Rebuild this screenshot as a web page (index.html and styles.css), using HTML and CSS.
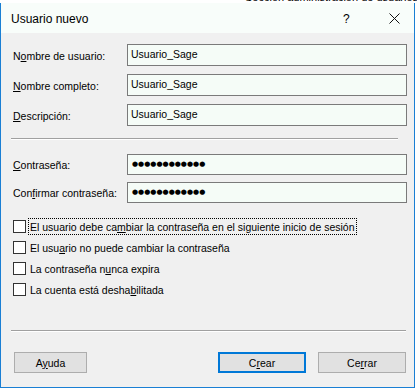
FILE: index.html
```html
<!DOCTYPE html>
<html lang="es">
<head>
<meta charset="utf-8">
<title>Usuario nuevo</title>
<link rel="stylesheet" href="styles.css">
</head>
<body>
<div class="behind"><span>Sección administración de usuarios LDAP</span></div>
<div class="window">
  <div class="titlebar">
    <span class="title">Usuario nuevo</span>
    <span class="help">?</span>
    <span class="close"><svg width="11" height="11" viewBox="0 0 11 11"><path d="M0.5 0.5 L10.5 10.5 M10.5 0.5 L0.5 10.5" stroke="#111" stroke-width="1" fill="none"/></svg></span>
  </div>
  <div class="content">
    <div class="group g1">
      <div class="row"><span class="label">N<u>o</u>mbre de usuario:</span><div class="field tall">Usuario_Sage</div></div>
      <div class="row"><span class="label"><u>N</u>ombre completo:</span><div class="field tall">Usuario_Sage</div></div>
      <div class="row"><span class="label"><u>D</u>escripción:</span><div class="field tall">Usuario_Sage</div></div>
    </div>
    <div class="sep sep1"></div>
    <div class="group g2">
      <div class="row"><span class="label"><u>C</u>ontraseña:</span><div class="field short"><span class="dots">●●●●●●●●●●●●</span></div></div>
      <div class="row"><span class="label">Con<u>f</u>irmar contraseña:</span><div class="field short"><span class="dots">●●●●●●●●●●●●</span></div></div>
    </div>
    <div class="checks">
      <div class="check"><span class="box"></span><span class="ctext focus">El usuario debe ca<u>m</u>biar la contraseña en el siguiente inicio de sesión</span></div>
      <div class="check"><span class="box"></span><span class="ctext">El usu<u>a</u>rio no puede cambiar la contraseña</span></div>
      <div class="check"><span class="box"></span><span class="ctext">La contraseña n<u>u</u>nca expira</span></div>
      <div class="check"><span class="box"></span><span class="ctext">La cuenta está desha<u>b</u>ilitada</span></div>
    </div>
    <div class="sep sep2"></div>
    <div class="buttons">
      <button class="btn help-btn">A<u>y</u>uda</button>
      <button class="btn wide default">C<u>r</u>ear</button>
      <button class="btn wide">Ce<u>r</u>rar</button>
    </div>
  </div>
</div>
</body>
</html>
```
FILE: styles.css
```css
html, body {
  margin: 0;
  padding: 0;
  background: #ffffff;
}
body {
  width: 417px;
  height: 388px;
  overflow: hidden;
  font-family: "Liberation Sans", Arial, sans-serif;
  font-size: 10.5px;
  color: #000;
}
.behind {
  height: 3px;
  overflow: hidden;
  padding-left: 245px;
  white-space: nowrap;
}
.behind span {
  display: block;
  margin-top: -9px;
  font-size: 11px;
  line-height: 12px;
}
.window {
  width: 415px;
  height: 385px;
  box-sizing: border-box;
  border-left: 1px solid #1a7fd4;
  border-right: 1px solid #1a7fd4;
  border-bottom: 1px solid #1a7fd4;
  background: #f0f0f0;
  display: flex;
  flex-direction: column;
}
.titlebar {
  height: 30px;
  background: #f8fdfa;
  display: flex;
  align-items: center;
}
.title {
  margin-left: 10px;
  font-size: 12px;
  flex: 1;
  padding-top: 1px;
}
.help {
  font-size: 12px;
  width: 10px;
  margin-right: 36px;
  padding-top: 1px;
}
.close {
  width: 11px;
  height: 11px;
  margin-right: 14px;
  display: flex;
}
.content {
  flex: 1;
  display: flex;
  flex-direction: column;
}
.group {
  display: flex;
  flex-direction: column;
  padding-left: 12px;
}
.g1 {
  margin-top: 11px;
  gap: 8px;
}
.g2 {
  margin-top: 14px;
  gap: 7px;
}
.row {
  display: flex;
  align-items: center;
}
.label {
  width: 114px;
  padding-top: 1px;
}
.field {
  width: 280px;
  box-sizing: border-box;
  border: 1px solid #7a7a7a;
  background: #f5fcf7;
  padding-left: 3px;
  display: flex;
  align-items: center;
}
.field.tall {
  height: 22px;
  padding-bottom: 2px;
}
.field.short {
  height: 21px;
  padding-bottom: 1px;
}
.dots {
  font-family: "DejaVu Sans", sans-serif;
  font-size: 7px;
  letter-spacing: 0;
  padding-left: 1px;
}
.sep {
  height: 1px;
  background: #a0a0a0;
  border-bottom: 1px solid #ffffff;
  margin-left: 10px;
}
.sep1 {
  margin-top: 12px;
  width: 387px;
}
.sep2 {
  margin-top: 32px;
  width: 395px;
}
.checks {
  margin-top: 15px;
  display: flex;
  flex-direction: column;
  gap: 4px;
  padding-left: 12px;
}
.check {
  height: 17px;
  display: flex;
  align-items: center;
}
.box {
  width: 13px;
  height: 13px;
  box-sizing: border-box;
  border: 1px solid #333333;
  background: #ffffff;
  margin-right: 2px;
}
.ctext {
  height: 17px;
  box-sizing: border-box;
  border: 1px dotted transparent;
  padding: 1px 1px 0 1px;
  line-height: 14px;
}
.ctext.focus {
  border-color: #000000;
}
.buttons {
  margin-top: 20px;
  display: flex;
  padding-left: 13px;
  gap: 12px;
}
.btn {
  height: 21px;
  box-sizing: border-box;
  background: #e1e1e1;
  border: 1px solid #adadad;
  font-family: "Liberation Sans", Arial, sans-serif;
  font-size: 10.5px;
  color: #000;
  padding: 0;
  margin: 0;
}
.help-btn {
  width: 73px;
  margin-right: 119px;
}
.wide {
  width: 88px;
}
.default {
  border: 2px solid #0078d7;
}
u {
  text-decoration-thickness: 1px;
  text-underline-offset: 1px;
}
```
